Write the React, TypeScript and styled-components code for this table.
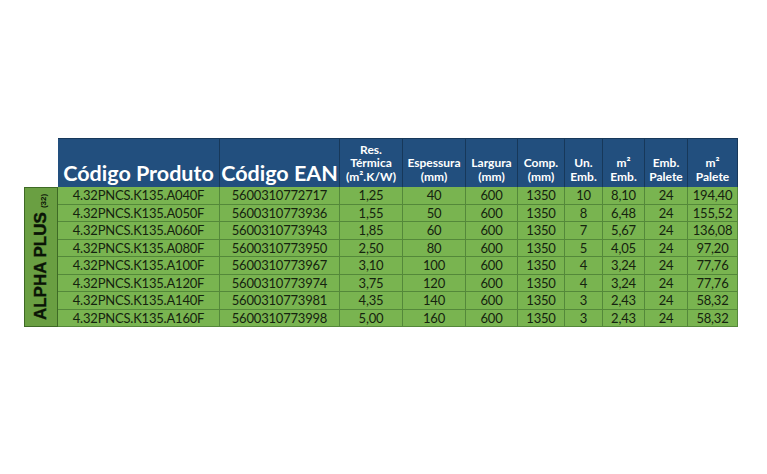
import React from "react";
import styled, { createGlobalStyle } from "styled-components";

const Global = createGlobalStyle`
  html, body { margin: 0; padding: 0; background: #ffffff; }
  body { font-family: Lato, "Open Sans", sans-serif; }
`;

const Page = styled.div`
  width: 767px;
  height: 474px;
  box-sizing: border-box;
  padding: 138px 0 0 24px;
`;

const Grid = styled.div`
  display: grid;
  grid-template-columns: 34px 162px 120px 63px 63px 52px 47px 38px 42px 43px 50px;
  grid-template-rows: 49px repeat(8, 17.5px);
  width: max-content;
`;

const Blank = styled.div``;

const HeadCell = styled.div<{ $big?: boolean }>`
  background: #224f7e;
  color: #ffffff;
  border-right: 1px solid #17385a;
  border-top: 1px solid #17385a;
  box-sizing: border-box;
  display: flex;
  align-items: flex-end;
  justify-content: center;
  text-align: center;
  font-weight: 700;
  font-size: ${(p) => (p.$big ? "21.5px" : "12px")};
  line-height: ${(p) => (p.$big ? "24px" : "13.5px")};
  padding-bottom: ${(p) => (p.$big ? "2px" : "4px")};
  white-space: nowrap;
  letter-spacing: ${(p) => (p.$big ? "0" : "0")};
`;

const Side = styled.div`
  grid-row: 2 / span 8;
  grid-column: 1;
  background: #6a9f42;
  border: 1px solid #3e6a25;
  box-sizing: border-box;
  display: flex;
  align-items: center;
  justify-content: center;
  overflow: hidden;
`;

const SideText = styled.div`
  transform: rotate(-90deg);
  white-space: nowrap;
  font-family: "Liberation Sans", Arial, sans-serif;
  font-weight: 700;
  font-size: 17px;
  color: #0a1406;
  display: flex;
  align-items: baseline;
  gap: 4px;
  -webkit-text-stroke: 0.4px #0a1406;
`;

const Sub = styled.span`
  font-size: 8px;
  -webkit-text-stroke: 0;
`;

const Cell = styled.div`
  background: #79b450;
  border-right: 1px solid #54883a;
  border-bottom: 1px solid #54883a;
  box-sizing: border-box;
  display: flex;
  align-items: center;
  justify-content: center;
  font-size: 13px;
  color: #15230f;
  white-space: nowrap;
  letter-spacing: -0.2px;
`;

const headers: { label: React.ReactNode; big?: boolean }[] = [
  { label: "Código Produto", big: true },
  { label: "Código EAN", big: true },
  { label: <>Res.<br />Térmica<br />(m².K/W)</> },
  { label: <>Espessura<br />(mm)</> },
  { label: <>Largura<br />(mm)</> },
  { label: <>Comp.<br />(mm)</> },
  { label: <>Un.<br />Emb.</> },
  { label: <>m²<br />Emb.</> },
  { label: <>Emb.<br />Palete</> },
  { label: <>m²<br />Palete</> },
];

const rows: string[][] = [
  ["4.32PNCS.K135.A040F", "5600310772717", "1,25", "40", "600", "1350", "10", "8,10", "24", "194,40"],
  ["4.32PNCS.K135.A050F", "5600310773936", "1,55", "50", "600", "1350", "8", "6,48", "24", "155,52"],
  ["4.32PNCS.K135.A060F", "5600310773943", "1,85", "60", "600", "1350", "7", "5,67", "24", "136,08"],
  ["4.32PNCS.K135.A080F", "5600310773950", "2,50", "80", "600", "1350", "5", "4,05", "24", "97,20"],
  ["4.32PNCS.K135.A100F", "5600310773967", "3,10", "100", "600", "1350", "4", "3,24", "24", "77,76"],
  ["4.32PNCS.K135.A120F", "5600310773974", "3,75", "120", "600", "1350", "4", "3,24", "24", "77,76"],
  ["4.32PNCS.K135.A140F", "5600310773981", "4,35", "140", "600", "1350", "3", "2,43", "24", "58,32"],
  ["4.32PNCS.K135.A160F", "5600310773998", "5,00", "160", "600", "1350", "3", "2,43", "24", "58,32"],
];

export default function App() {
  return (
    <Page>
      <Global />
      <Grid>
        <Blank />
        {headers.map((h, i) => (
          <HeadCell key={i} $big={h.big}>
            <span>{h.label}</span>
          </HeadCell>
        ))}
        <Side>
          <SideText>
            <span>ALPHA PLUS</span>
            <Sub>(32)</Sub>
          </SideText>
        </Side>
        {rows.map((r, ri) =>
          r.map((v, ci) => <Cell key={`${ri}-${ci}`}>{v}</Cell>)
        )}
      </Grid>
    </Page>
  );
}
